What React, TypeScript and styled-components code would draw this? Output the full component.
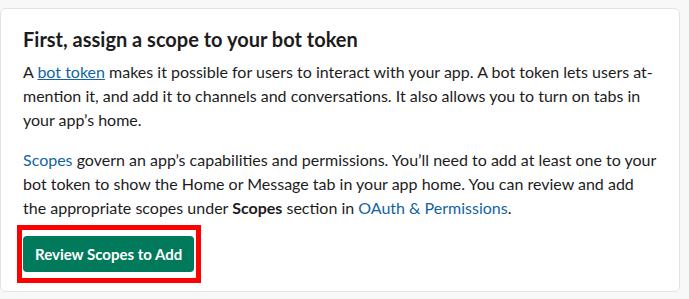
import React from 'react';
import styled, { createGlobalStyle } from 'styled-components';

const GlobalStyle = createGlobalStyle`
  html, body {
    margin: 0;
    padding: 0;
    background: #f8f8f8;
  }
  body {
    font-family: Lato, "Liberation Sans", sans-serif;
    color: #1d1c1d;
  }
`;

const Page = styled.div`
  padding-top: 8px;
`;

const Card = styled.section`
  box-sizing: border-box;
  width: 680px;
  background: #fff;
  border: 1px solid #e2e2e2;
  border-radius: 6px;
  padding: 17px 22px 19px 22px;
`;

const Title = styled.h2`
  margin: 0 0 8px;
  font-size: 20px;
  line-height: 26px;
  font-weight: 700;
`;

const Text = styled.p`
  margin: 0 0 16px;
  font-size: 16px;
  line-height: 24px;
`;

const Link = styled.a<{ $underline?: boolean }>`
  color: #1264a3;
  text-decoration: ${p => (p.$underline ? 'underline' : 'none')};
`;

const Highlight = styled.span`
  position: relative;
  display: inline-block;
  &::after {
    content: '';
    position: absolute;
    top: -11px;
    left: -6px;
    right: -7px;
    bottom: -11px;
    border: 5px solid #ff0000;
    pointer-events: none;
  }
`;

const PrimaryButton = styled.button`
  display: block;
  height: 36px;
  padding: 0 12px;
  border: none;
  border-radius: 4px;
  background: #007a5a;
  color: #fff;
  font-family: Lato, "Liberation Sans", sans-serif;
  font-size: 15px;
  font-weight: 700;
  cursor: pointer;
`;

const App: React.FC = () => {
  return (
    <Page>
      <GlobalStyle />
      <Card>
        <Title>First, assign a scope to your bot token</Title>
        <Text>
          A <Link href="#" $underline>bot token</Link> makes it possible for users to interact with your app. A bot
          token lets users at-mention it, and add it to channels and conversations. It also allows you to turn on
          tabs in your app’s home.
        </Text>
        <Text>
          <Link href="#">Scopes</Link> govern an app’s capabilities and permissions. You’ll need to add at least one
          to your bot token to show the Home or Message tab in your app home. You can review and add the appropriate
          scopes under <b>Scopes</b> section in <Link href="#">OAuth &amp; Permissions</Link>.
        </Text>
        <Highlight>
          <PrimaryButton>Review Scopes to Add</PrimaryButton>
        </Highlight>
      </Card>
    </Page>
  );
};

export default App;
